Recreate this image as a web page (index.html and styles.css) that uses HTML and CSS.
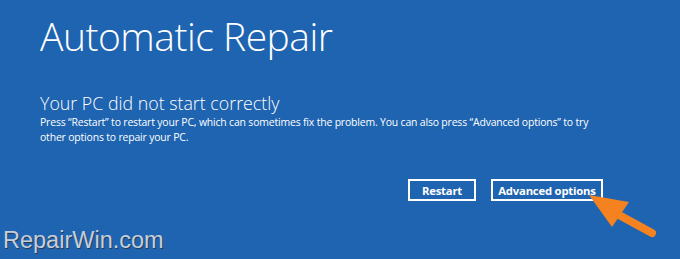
FILE: index.html
```html
<!DOCTYPE html>
<html lang="en">
<head>
<meta charset="utf-8">
<title>Automatic Repair</title>
<link rel="stylesheet" href="styles.css">
</head>
<body>
<main class="screen">
  <h1 class="title">Automatic Repair</h1>
  <section class="message">
    <h2 class="subtitle">Your PC did not start correctly</h2>
    <p class="desc">Press “Restart” to restart your PC, which can sometimes fix the problem. You can also press “Advanced options” to try other options to repair your PC.</p>
  </section>
  <div class="actions">
    <button class="btn">Restart</button>
    <button class="btn">Advanced options</button>
  </div>
  <div class="watermark">RepairWin.com</div>
  <svg class="arrow" width="80" height="50" viewBox="0 0 80 50" aria-hidden="true">
    <line x1="30" y1="20" x2="63" y2="38" stroke="#f58220" stroke-width="8" stroke-linecap="round"/>
    <polygon points="0,0 40,7 23,32" fill="#f58220"/>
  </svg>
</main>
</body>
</html>
```

FILE: styles.css
```css
html, body {
  margin: 0;
  padding: 0;
}
body {
  background: #1e64b0;
  width: 680px;
  height: 259px;
  overflow: hidden;
}
.screen {
  position: relative;
  width: 680px;
  height: 259px;
  box-sizing: border-box;
  padding: 10px 0 0 40px;
  color: #ffffff;
  font-family: "Open Sans", "Noto Sans", sans-serif;
  display: flex;
  flex-direction: column;
}
.title {
  margin: 0;
  font-weight: 300;
  font-size: 39px;
  line-height: 52px;
  letter-spacing: -0.5px;
}
.message {
  margin-top: 30px;
}
.subtitle {
  margin: 0;
  font-weight: 300;
  font-size: 17.8px;
  line-height: 22px;
}
.desc {
  margin: 1px 0 0;
  width: 556px;
  font-size: 10.45px;
  line-height: 15px;
  letter-spacing: -0.17px;
}
.actions {
  display: flex;
  gap: 15px;
  margin: 34px 0 0 368px;
}
.btn {
  background: transparent;
  color: #fff;
  border: 2px solid #fff;
  font-family: "Open Sans", "Noto Sans", sans-serif;
  font-weight: 700;
  font-size: 11.3px;
  height: 22px;
  padding: 0;
  box-sizing: border-box;
  letter-spacing: -0.2px;
}
.btn:first-child { width: 68px; }
.btn:last-child { width: 112px; }
.watermark {
  position: absolute;
  left: 3px;
  top: 227px;
  font-family: "Liberation Sans", Arial, sans-serif;
  font-size: 23.5px;
  color: #c5cfdc;
  text-shadow: 1px 1px 0 #2a3a50;
}
.arrow {
  position: absolute;
  left: 589px;
  top: 195px;
}
```
